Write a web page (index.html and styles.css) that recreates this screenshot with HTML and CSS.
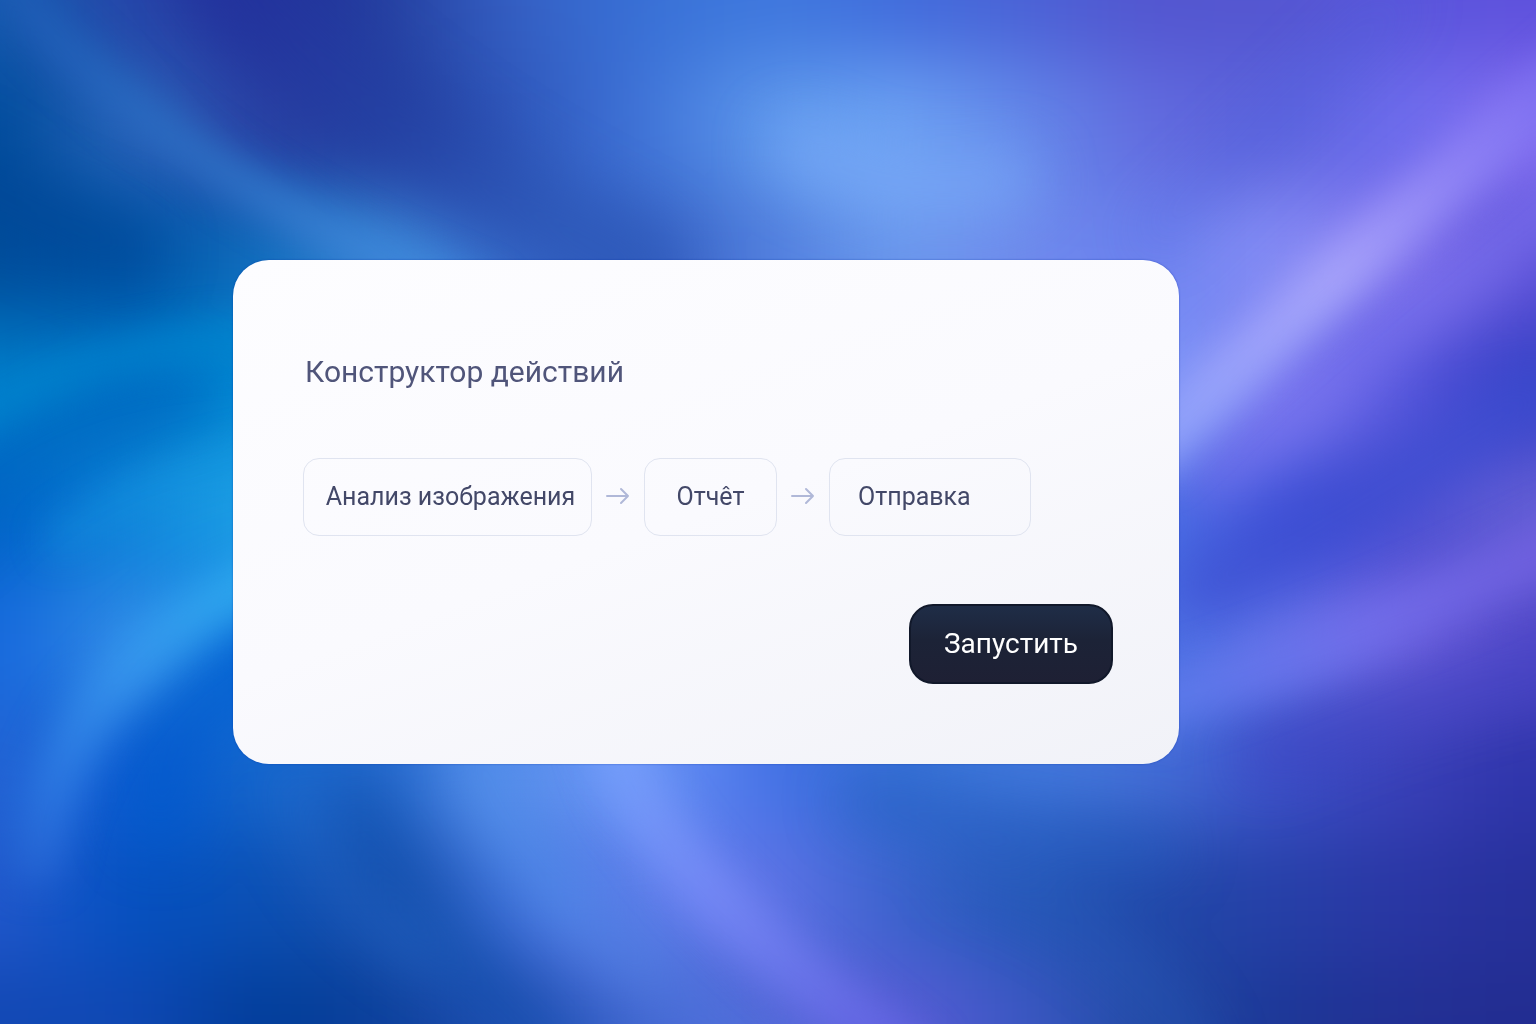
FILE: index.html
```html
<!DOCTYPE html>
<html lang="ru">
<head>
<meta charset="utf-8">
<meta name="viewport" content="width=device-width, initial-scale=1">
<title>Конструктор действий</title>
<link rel="stylesheet" href="styles.css">
</head>
<body>
<div class="wallpaper" aria-hidden="true">
  <div class="mesh">
    <div class="mesh__row mesh__row--1"></div>
    <div class="mesh__row mesh__row--2"></div>
    <div class="mesh__row mesh__row--3"></div>
    <div class="mesh__row mesh__row--4"></div>
    <div class="mesh__row mesh__row--5"></div>
    <div class="mesh__row mesh__row--6"></div>
    <div class="mesh__row mesh__row--7"></div>
    <div class="mesh__row mesh__row--8"></div>
    <div class="mesh__row mesh__row--9"></div>
  </div>
  <svg class="rays" viewBox="0 0 1536 1024" preserveAspectRatio="none">
    <defs>
      <filter id="soft" filterUnits="userSpaceOnUse" x="-300" y="-300" width="2136" height="1624" color-interpolation-filters="sRGB"><feGaussianBlur stdDeviation="28"/></filter>
      <filter id="fine" filterUnits="userSpaceOnUse" x="-300" y="-300" width="2136" height="1624" color-interpolation-filters="sRGB"><feGaussianBlur stdDeviation="18"/></filter>
      <linearGradient id="shade" gradientUnits="userSpaceOnUse" x1="220" y1="0" x2="560" y2="250">
        <stop offset="0" stop-color="#23319c"/><stop offset=".5" stop-color="#2440a2"/><stop offset="1" stop-color="#2d58b8"/>
      </linearGradient>
      <linearGradient id="streak" gradientUnits="userSpaceOnUse" x1="0" y1="0" x2="440" y2="270">
        <stop offset="0" stop-color="#1e5cb6"/><stop offset=".5" stop-color="#2f74c8"/><stop offset="1" stop-color="#438ee0"/>
      </linearGradient>
      <linearGradient id="ray" gradientUnits="userSpaceOnUse" x1="1160" y1="460" x2="1560" y2="60">
        <stop offset="0" stop-color="#91a4fb"/><stop offset=".45" stop-color="#aaa6fb"/><stop offset=".75" stop-color="#9084f6"/><stop offset="1" stop-color="#7a6cf0"/>
      </linearGradient>
      <linearGradient id="ribbon" gradientUnits="userSpaceOnUse" x1="600" y1="760" x2="880" y2="1024">
        <stop offset="0" stop-color="#76a0fb"/><stop offset=".45" stop-color="#788bf7"/><stop offset="1" stop-color="#6768e6"/>
      </linearGradient>
      <linearGradient id="wave" gradientUnits="userSpaceOnUse" x1="240" y1="560" x2="30" y2="900">
        <stop offset="0" stop-color="#30b0f0"/><stop offset=".4" stop-color="#3896ee"/><stop offset=".75" stop-color="#2e78e2"/><stop offset="1" stop-color="#2460d0"/>
      </linearGradient>
      <linearGradient id="beam" gradientUnits="userSpaceOnUse" x1="1170" y1="720" x2="1560" y2="530">
        <stop offset="0" stop-color="#607eee"/><stop offset=".5" stop-color="#7470ec"/><stop offset="1" stop-color="#7460e0"/>
      </linearGradient>
    </defs>
    <g filter="url(#soft)" fill="none" stroke-linecap="round">
      <path stroke="url(#shade)" stroke-width="90" opacity=".8" d="M220-60Q320 110 640 270"/>
      <path stroke="#004494" stroke-width="60" opacity=".6" d="M-60 160Q20 210 130 250"/>
      <path stroke="#0066c0" stroke-width="46" opacity=".8" d="M-60 530Q40 420 190 392"/>
      <path stroke="#0058cc" stroke-width="60" opacity=".7" d="M300 650Q150 700 160 820"/>
      <path stroke="#0e4ca8" stroke-width="50" opacity=".6" d="M360 800Q390 910 560 1060"/>
      <path stroke="#2a6ccc" stroke-width="22" opacity=".6" d="M290 770Q300 880 430 960"/>
      <path stroke="#5896f0" stroke-width="46" opacity=".6" d="M475 730Q485 850 640 960"/>
      <path stroke="#4f76de" stroke-width="46" opacity=".6" d="M600 930Q680 1000 800 1090"/>
      <path stroke="#7cacf9" stroke-width="60" opacity=".6" d="M800 150Q890 200 1010 180"/>
      <path stroke="#4a60dc" stroke-width="16" opacity=".6" d="M1150 240Q1260 130 1400 0"/>
      <path stroke="#7a72ee" stroke-width="50" opacity=".7" d="M1210 480Q1350 350 1580 190"/>
      <path stroke="#3a4cd0" stroke-width="60" opacity=".8" d="M1200 590Q1340 520 1540 390"/>
      <path stroke="#3c3fc0" stroke-width="40" opacity=".6" d="M1260 760Q1400 700 1570 660"/>
      <path stroke="#2158bc" stroke-width="40" opacity=".6" d="M860 800Q980 830 1160 850"/>
      <path stroke="#2a5cba" stroke-width="26" opacity=".6" d="M960 870Q1140 930 1200 1060"/>
    </g>
    <g filter="url(#fine)" fill="none" stroke-linecap="round">
      <path stroke="url(#streak)" stroke-width="36" opacity=".9" d="M-20-60Q110 150 480 300"/>
      <path stroke="#0086d0" stroke-width="30" opacity=".8" d="M-60 440Q60 335 320 338"/>
      <path stroke="#1a9ce4" stroke-width="30" opacity=".4" d="M60 540Q160 470 300 450"/>
      <path stroke="url(#wave)" stroke-width="52" opacity=".85" d="M310 560Q70 640 36 860"/>
      <path stroke="url(#ribbon)" stroke-width="54" opacity=".8" d="M616 730Q624 850 910 1060"/>
      <path stroke="url(#ray)" stroke-width="56" opacity=".9" d="M1150 450Q1300 300 1590 60"/>
      <path stroke="url(#beam)" stroke-width="54" opacity=".75" d="M1150 706Q1330 650 1570 540"/>
    </g>
  </svg>
</div>

<main class="stage">
  <section class="card" aria-labelledby="title">
    <h1 class="card__title" id="title">Конструктор действий</h1>
    <ol class="flow">
      <li class="flow__step flow__step--wide">Анализ изображения</li>
      <li class="flow__arrow" aria-hidden="true"><svg class="icon" viewBox="0 0 24 24"><path d="M1 11H22M15 4L22 11L15 18"/></svg></li>
      <li class="flow__step">Отчêт</li>
      <li class="flow__arrow" aria-hidden="true"><svg class="icon" viewBox="0 0 24 24"><path d="M1 11H22M15 4L22 11L15 18"/></svg></li>
      <li class="flow__step flow__step--last">Отправка</li>
    </ol>
    <button class="run" type="button">Запустить</button>
  </section>
</main>
</body>
</html>
```
FILE: styles.css
```css
* {
  box-sizing: border-box;
}

body {
  margin: 0;
  font-family: Roboto, "Liberation Sans", sans-serif;
  background: #2a5cc8;
}

.wallpaper {
  position: fixed;
  inset: 0;
  z-index: -1;
  overflow: hidden;
}

/* Colour mesh: each row is a run of evenly spaced stops, blurred together.
   It reaches past the window so that the blur never shows an edge. */
.mesh {
  position: absolute;
  inset: -19vh -8vw;
  display: grid;
  grid-template-rows: 2fr repeat(7, 1fr) 2fr;
  filter: blur(40px);
}

.mesh__row--1 { background: linear-gradient(90deg, #145aae, #145aae, #2846aa, #22309a, #243f9f, #3560c4, #3870d6, #3f79de, #406cdc, #4a62d6, #5355cf, #5456d0, #5a56dc, #5e50dc, #5e50dc); }
.mesh__row--2 { background: linear-gradient(90deg, #004c9c, #004c9c, #2a66bc, #2a3ea2, #2340a0, #2e56ba, #3f73d8, #5e98ec, #6ea4f4, #6388ea, #626ade, #5a62dc, #6e6eee, #846cf0, #846cf0); }
.mesh__row--3 { background: linear-gradient(90deg, #004c9a, #004c9a, #0054a6, #0f6cbc, #3c86d6, #3668c8, #3560c2, #507ddd, #6c9bee, #6f8aec, #6a80ee, #8890f6, #8272ee, #5b4fd6, #5b4fd6); }
.mesh__row--4 { background: linear-gradient(90deg, #007cc8, #007cc8, #0070c4, #008ed6, #2a80d8, #3a70d0, #3a68c8, #507ddd, #6c90ee, #6f8aec, #7c9af8, #7c7cf2, #5454dc, #3840c4, #3840c4); }
.mesh__row--5 { background: linear-gradient(90deg, #0062c8, #0062c8, #0e84da, #20a6e8, #2090e0, #3a80e0, #4a80e0, #507ddd, #5080e0, #4a78e0, #4a72e6, #3e50d8, #4f50d2, #6560d6, #6560d6); }
.mesh__row--6 { background: linear-gradient(90deg, #1668dc, #1668dc, #348ee8, #0672dc, #1a70d8, #4a88e8, #5a90f0, #4a78e4, #3a70d8, #4074dc, #4870e4, #6272e8, #6c60de, #5248c8, #5248c8); }
.mesh__row--7 { background: linear-gradient(90deg, #2464d4, #2464d4, #0a5cd2, #1366cc, #2468cc, #5a90ec, #6e98f8, #4470e6, #3470d4, #4078dc, #4470d8, #3c50c8, #3a40b8, #2e34aa, #2e34aa); }
.mesh__row--8 { background: linear-gradient(90deg, #2258cc, #2258cc, #0250c0, #0c50b4, #1850ae, #3c70d8, #6080ec, #6274e8, #3a62cc, #2458b8, #2048a8, #2640a8, #2a36a4, #26309a, #26309a); }
.mesh__row--9 { background: linear-gradient(90deg, #1248b4, #1248b4, #1048b4, #003c98, #0c409a, #2450b4, #4068d0, #5468d8, #5a5cd6, #3c58c4, #204aa4, #1c3696, #223094, #222c90, #222c90); }

.rays {
  position: absolute;
  inset: 0;
  width: 100%;
  height: 100%;
}

.stage {
  display: flex;
  align-items: center;
  min-height: 100vh;
  padding: 0 357px 0 233px;
}

.card {
  flex: 1;
  display: flex;
  flex-direction: column;
  padding: 92px 66px 80px 70px;
  border-radius: 36px;
  background: linear-gradient(160deg, #fdfdff 0%, #fafafe 50%, #f1f2f8 100%);
  box-shadow: 0 0 2px rgba(0, 50, 160, 0.6);
}

.card__title {
  margin: 0 0 66px 2px;
  font-size: 30px;
  line-height: 40px;
  font-weight: 400;
  color: #50557a;
}

.flow {
  display: flex;
  align-items: center;
  gap: 14px;
  margin: 0 0 68px;
  padding: 0;
  list-style: none;
}

.flow__step {
  display: flex;
  align-items: center;
  justify-content: center;
  width: 133px;
  height: 78px;
  border: 1px solid #e0e4f0;
  border-radius: 16px;
  font-size: 25px;
  line-height: 36px;
  white-space: nowrap;
  color: #434868;
}

.flow__step--wide {
  width: 289px;
  padding-left: 6px;
}

.flow__step--last {
  justify-content: flex-start;
  width: 202px;
  padding-left: 28px;
}

.flow__arrow {
  display: flex;
}

.icon {
  width: 24px;
  height: 24px;
  fill: none;
  stroke: #b0b8d8;
  stroke-width: 2;
  stroke-linecap: round;
  stroke-linejoin: round;
}

.run {
  align-self: flex-end;
  width: 204px;
  height: 80px;
  border: 2px solid #11182a;
  border-radius: 24px;
  background: linear-gradient(#1f2d47, #1c2337 45%, #1e2034);
  font-family: inherit;
  font-size: 28px;
  line-height: 36px;
  color: #fff;
  cursor: pointer;
}
```
